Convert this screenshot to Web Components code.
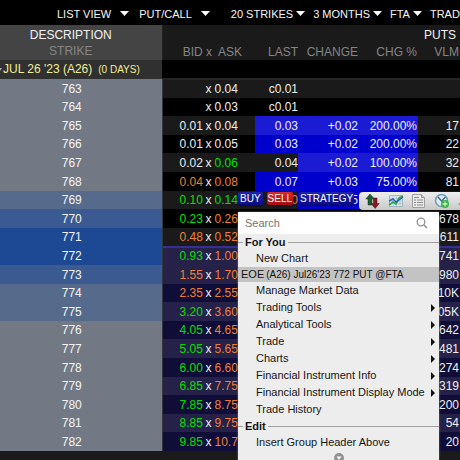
<!DOCTYPE html>
<html lang="en">
<head>
<meta charset="utf-8">
<title>Option chain</title>
<style>
html,body{margin:0;background:#1a1a1a;color:#eee;font:12px/18px "Liberation Sans",Arial,sans-serif}
body{height:100vh;overflow:hidden}
</style>
</head>
<body>
<option-app></option-app>
<script>
class Base extends HTMLElement{
  constructor(){super();this.attachShadow({mode:"open"});}
  connectedCallback(){this.shadowRoot.innerHTML=this.render();}
}

customElements.define("filter-button",class extends Base{
  render(){return `<style>
  :host{display:block;flex:none}
  button{all:unset;display:flex;align-items:center;gap:var(--gap,3px);font-size:11px;line-height:16px;color:#f4f4f4;white-space:nowrap}
  svg{display:block}
  </style><button type="button"><slot></slot><svg width="9" height="5" viewBox="0 0 9 5" aria-hidden="true"><path d="M0 0h9L4.5 5z" fill="#fff"/></svg></button>`;}
});

customElements.define("filter-bar",class extends Base{
  render(){return `<style>
  :host{display:flex;align-items:center;height:25px;padding:2px 0 0 57px;box-sizing:border-box;background:#000;overflow:hidden}
  .wide{--gap:9px}
  .view{margin-right:10px}.side{margin-right:21px}
  .count,.months,.venue{margin-right:8px}
  </style>
  <filter-button class="wide view">LIST VIEW</filter-button>
  <filter-button class="wide side">PUT/CALL</filter-button>
  <filter-button class="count">20 STRIKES</filter-button>
  <filter-button class="months">3 MONTHS</filter-button>
  <filter-button class="venue">FTA</filter-button>
  <filter-button>TRAD</filter-button>`;}
});

const ROWS=[
  [763,"","0.04","","","c0.01","","","",""],
  [764,"","0.03","","","c0.01","","","",""],
  [765,"0.01","0.04","","","0.03","+0.02","200.00%","17","lcp"],
  [766,"0.01","0.05","","","0.03","+0.02","200.00%","22","lcp"],
  [767,"0.02","0.06","","g","0.04","+0.02","100.00%","32","cp"],
  [768,"0.04","0.08","o","o","0.07","+0.03","75.00%","81","lcp"],
  [769,"0.10","0.14","g","g","0.10","+0.05","","","cp"],
  [770,"0.23","0.26","g","o","","","","678",""],
  [771,"0.48","0.52","o","o","","","","611",""],
  [772,"0.93","1.00","g","o","","","","741",""],
  [773,"1.55","1.70","o","o","","","","980",""],
  [774,"2.35","2.55","o","o","","","","10K",""],
  [775,"3.20","3.60","g","o","","","","05K",""],
  [776,"4.05","4.65","g","o","","","","642",""],
  [777,"5.05","5.65","g","o","","","","481",""],
  [778,"6.00","6.60","g","o","","","","274",""],
  [779,"6.85","7.75","g","o","","","","319",""],
  [780,"7.85","8.75","g","o","","","","200",""],
  [781,"8.85","9.75","g","o","","","","54",""],
  [782,"9.85","10.7","g","o","","","","20",""]
];
const zone=k=>k===771||k===772?"at":k===770||k===773?"near":k===769||k===774||k===775?"mid":"far";

customElements.define("option-chain",class extends Base{
  render(){
    const body=ROWS.map(([k,b,a,bc,ac,l,c,p,v,f])=>`<tr class="${k>771?"itm":""}${k===772?" edge":""}">
      <th scope="row" class="${zone(k)}">${k}</th>
      <td class="quote"><div><span class="${bc}">${b}</span><i>x</i><span class="${ac}">${a}</span></div></td>
      <td class="${f.includes("l")?"hot":""}${k===769?" o":""}">${l}</td>
      <td class="${f.includes("c")?"hot":""}">${c}</td>
      <td class="${f.includes("p")?"hot":""}">${p}</td>
      <td class="vol">${v}</td></tr>`).join("");
    return `<style>
    :host{display:block}
    table{width:100%;table-layout:fixed;border-collapse:collapse}
    th,td{padding:0;font-weight:400;white-space:nowrap;line-height:18px}
    .c1{width:162px}.c2{width:93px}.c3{width:43px}.c4{width:60px}.c5{width:60px}
    thead th{background:#1a1a1a;color:#858585;text-align:right}
    thead th[rowspan]{background:#444;text-align:center;border-right:1px solid #222;padding-right:20px;line-height:16px}
    thead b{font-weight:400;color:#f2f2f2}
    thead small{font-size:12px;display:block}
    thead .top{height:20px}thead .low{height:15px}
    thead .low th{line-height:15px}
    thead .puts{color:#f2f2f2;padding-right:4px}
    thead .ba{padding-right:13px;white-space:pre}
    thead .pc,.vol,.vl{padding-right:1px}
    .expiry{height:19px;background:#000}
    .expiry th{background:#303030;color:#f0ee98;text-align:left}
    .expiry td{border-bottom:2px solid #262626}
    .expiry div{display:flex;align-items:baseline}
    .expiry svg{width:3px;height:4px;align-self:center}
    .expiry small{font-size:10px;margin-left:6px}
    .data tr{height:19px;background:#1a1a1a}
    .data tr:nth-child(even){background:#000}
    .data tr:nth-child(5n+2),.data tr:nth-child(5n+4){height:18px}
    .data .itm{background:#252148}
    .data .itm:nth-child(even){background:#100e38}
    .data .edge:nth-child(even){background:#252148}
    .edge td{box-shadow:inset 0 2px #352f94}
    .data th{text-align:center;padding-right:18px;color:#f4f4f4;border-right:1px solid #34363d}
    .far{background:#727985}.mid{background:#566b8b}.near{background:#3a5a91}.at{background:#1c4894}
    td{text-align:right}
    td:nth-child(5){padding-right:1px}
    td.quote div{display:grid;grid-template-columns:23px 6px 23px;gap:3px;justify-content:start;padding-left:17px;text-align:left}
    i{font-style:normal}
    .g{color:#00e000}.o{color:#f08030}
    tr .hot{background:#1b1bd4}
    tr:nth-child(even) .hot,tr:nth-child(7) .hot{background:#0000cc}
    </style>
    <table>
    <colgroup><col class="c1"><col class="c2"><col class="c3"><col class="c4"><col class="c5"><col></colgroup>
    <thead>
    <tr class="top"><th rowspan="2" scope="col"><b>DESCRIPTION</b><small>STRIKE</small></th><th colspan="5" class="puts">PUTS</th></tr>
    <tr class="low"><th scope="col" class="ba">BID x  ASK</th><th scope="col">LAST</th><th scope="col">CHANGE</th><th scope="col" class="pc">CHG %</th><th scope="col" class="vl">VLM</th></tr>
    </thead>
    <tbody><tr class="expiry"><th scope="rowgroup"><div><svg viewBox="0 0 3 4" aria-hidden="true"><path d="M0 0h2L0 3z" fill="#aaa"/></svg><span>JUL 26 '23 (A26)</span><small>(0 DAYS)</small></div></th><td colspan="5"></td></tr></tbody>
    <tbody class="data">${body}</tbody>
    </table>`;}
});

customElements.define("trade-button",class extends Base{
  render(){return `<style>
  :host{display:block;flex:none}
  button{all:unset;display:block;box-sizing:border-box;padding:0 1px;border-radius:2px;font-size:10px;line-height:13px;color:#fff;background:linear-gradient(#2024ae,#0a0c82);box-shadow:0 1px 1px #00003c}
  :host([kind=buy]) button{padding:0 2px}
  :host([kind=sell]) button{background:linear-gradient(#d82a2a,#a80a10)}
  </style><button type="button"><slot></slot></button>`;}
});

customElements.define("quick-tools",class extends Base{
  render(){return `<style>
  :host{display:flex;align-items:flex-start}
  .strategy{margin-left:6px;margin-right:auto}
  .sell{margin-left:4px}
  .icons{display:flex;align-items:center;gap:8px;flex:none;width:101px;height:18px;padding-left:6px;box-sizing:border-box;overflow:hidden;background:linear-gradient(#eee,#c9c9c9);border-radius:4px 0 0 4px}
  .icons button{all:unset;flex:none;width:15px;height:16px}
  svg{display:block}
  </style>
  <trade-button kind="buy">BUY</trade-button><trade-button class="sell" kind="sell">SELL</trade-button><trade-button class="strategy">STRATEGY</trade-button>
  <div class="icons">
  <button type="button" aria-label="Trade"><svg width="15" height="16" viewBox="0 0 15 16"><path d="M5 1l4.500 5H7v6H3V6H.8z" fill="#1e5b32" stroke="#143b22" stroke-width=".5"/><path d="M8.500 5h3.500v5.500h2.200L10.200 15.500 6 10.500h2.500z" fill="#811b20" stroke="#501014" stroke-width=".5"/></svg></button>
  <button type="button" aria-label="Chart"><svg width="16" height="16" viewBox="0 0 16 16"><path d="M1.500 2.500h13v11h-13z" fill="#d9e7ef" stroke="#9eb4bf"/><path d="M1 5.500h14M1 8h14M1 10.500h14M5 2v12M8.500 2v12M12 2v12" stroke="#aac3cf" stroke-width=".7"/><path d="M1 12l4-3 3 2 3-6 4-2" fill="none" stroke="#37a849" stroke-width="1.700"/><path d="M1 8l4-2 3 3 3-2 4-3" fill="none" stroke="#2466bd" stroke-width="1.500"/></svg></button>
  <button type="button" aria-label="Order ticket"><svg width="15" height="16" viewBox="0 0 15 16"><path d="M1.500 1.500h9l3 3v10h-12z" fill="#e9e9e9" stroke="#a0a0a0"/><path d="M10.500 1.500v3h3" fill="#ccc" stroke="#999"/><path d="M3 4.500h5M3 7h2M6 7h6M3 9.500h2M6 9.500h6M3 12h2M6 12h6" stroke="#8c8c8c"/></svg></button>
  <button type="button" aria-label="Alert"><svg width="16" height="16" viewBox="0 0 16 16"><circle cx="7.500" cy="7.500" r="6" fill="#dcecf4" stroke="#729fb7" stroke-width="1.600"/><path d="M4 4l3.500 4 4-4" fill="none" stroke="#3f6b86" stroke-width="1.400"/><circle cx="11" cy="11" r="4" fill="#36b544"/><path d="M11 8.500v5M8.500 11h5" stroke="#c7f2bf" stroke-width="1.300"/></svg></button>
  <button type="button" aria-label="More"><svg width="15" height="16" viewBox="0 0 15 16"><path d="M1 12l6-9v9z" fill="#999"/></svg></button>
  </div>`;}
});

customElements.define("menu-item",class extends Base{
  render(){return `<style>
  :host{display:block}
  button{all:unset;display:flex;align-items:center;justify-content:space-between;width:100%;box-sizing:border-box;padding:0 4px 0 18px;line-height:17px;white-space:nowrap}
  svg{display:none;flex:none}
  :host([submenu]) svg{display:block}
  :host([current]) button{justify-content:start;gap:2px;padding-left:3px;line-height:15px;background:#c3c3c3}
  </style><button type="button"><slot></slot><svg width="4" height="8" viewBox="0 0 4 8" aria-hidden="true"><path d="M0 0l4 4-4 4z" fill="#111"/></svg></button>`;}
});

customElements.define("menu-section",class extends Base{
  render(){return `<style>
  :host{display:block}
  h2{display:flex;align-items:center;gap:2px;margin:0;font-size:11px;line-height:16px;font-weight:700}
  h2::before,h2::after{content:"";height:1px;background:#a0a0a0;width:5px}
  h2::after{flex:1}
  </style><section><h2><slot name="title"></slot></h2><slot></slot></section>`;}
});

customElements.define("context-menu",class extends Base{
  render(){return `<style>
  :host{display:block;background:#ededed;color:#151515;font-size:11px;box-shadow:0 0 2px #777}
  label{display:flex;align-items:center;height:22px;padding:0 3px 0 7px;background:#fff}
  input{all:unset;flex:1;min-width:0;line-height:18px}
  input::placeholder{color:#757575;opacity:1}
  label svg{margin-right:8px}
  .note{font-size:10px}
  .more{display:flex;justify-content:center;padding-top:2px}
  </style>
  <label><input type="search" placeholder="Search" aria-label="Search"><svg width="12" height="12" viewBox="0 0 12 12" aria-hidden="true"><circle cx="5" cy="5" r="3.800" fill="none" stroke="#909090" stroke-width="1.300"/><path d="M8 8l3 3" stroke="#909090" stroke-width="1.600"/></svg></label>
  <menu-section><span slot="title">For You</span>
  <menu-item>New Chart</menu-item>
  <menu-item current><span>EOE</span><span class="note">(A26) Jul26'23 772 PUT @FTA</span></menu-item>
  <menu-item>Manage Market Data</menu-item>
  <menu-item submenu>Trading Tools</menu-item>
  <menu-item submenu>Analytical Tools</menu-item>
  <menu-item submenu>Trade</menu-item>
  <menu-item submenu>Charts</menu-item>
  <menu-item submenu>Financial Instrument Info</menu-item>
  <menu-item submenu>Financial Instrument Display Mode</menu-item>
  <menu-item>Trade History</menu-item></menu-section>
  <menu-section><span slot="title">Edit</span>
  <menu-item>Insert Group Header Above</menu-item></menu-section>
  <div class="more"><svg width="10" height="10" viewBox="0 0 10 10" aria-hidden="true"><circle cx="5" cy="5" r="5" fill="#929292"/><path d="M2.500 3.500h5L5 7z" fill="#fff"/></svg></div>`;}
});

customElements.define("option-app",class extends Base{
  render(){return `<style>
  :host{display:block;position:relative;height:100%;overflow:hidden}
  quick-tools{position:absolute;left:238px;right:0;top:192px}
  context-menu{position:absolute;left:238px;top:212px;width:201px;bottom:0}
  </style><filter-bar></filter-bar><option-chain></option-chain><quick-tools></quick-tools><context-menu></context-menu>`;}
});
</script>
</body>
</html>
